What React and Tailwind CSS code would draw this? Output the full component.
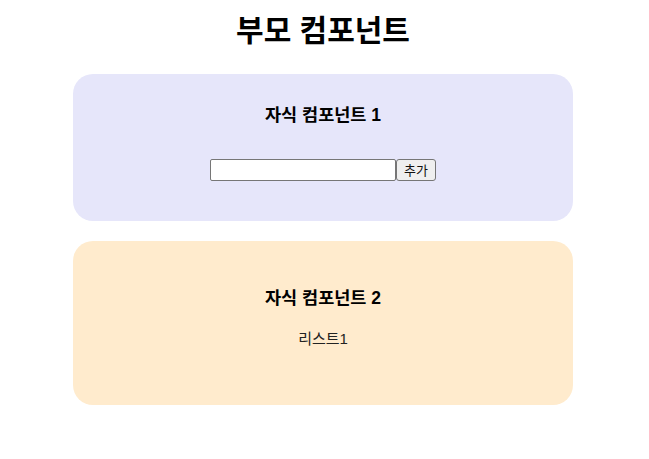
export default function App() {
  return (
    <div
      className="w-[646px] flex flex-col items-center bg-white text-black"
      style={{ fontFamily: '"Liberation Sans", "Noto Sans CJK KR", sans-serif' }}
    >
      <h1 className="mt-[11px] text-[30px] font-bold leading-[40px]">부모 컴포넌트</h1>
      <div className="mt-[23px] w-[500px] h-[147px] rounded-[20px] bg-[#E6E6FA] flex flex-col items-center pt-[30px]">
        <h3 className="text-[17.5px] font-bold leading-[22px]">자식 컴포넌트 1</h3>
        <div className="mt-[33px] flex items-center">
          <input
            type="text"
            className="w-[186px] h-[22px] border border-[#767676] rounded-[2px] bg-white px-[2px] text-[13px] outline-none"
          />
          <button className="h-[22px] px-[7px] border border-[#767676] rounded-[3px] bg-[#efefef] text-[13px] leading-none text-[#111]">
            추가
          </button>
        </div>
      </div>
      <div className="mt-[20px] w-[500px] h-[164px] rounded-[20px] bg-[#FFEBCD] flex flex-col items-center pt-[46px]">
        <h3 className="text-[17.5px] font-bold leading-[22px]">자식 컴포넌트 2</h3>
        <ul className="mt-[20px] list-none">
          <li className="text-[15px] leading-[20px] text-[#222]">리스트1</li>
        </ul>
      </div>
    </div>
  );
}
